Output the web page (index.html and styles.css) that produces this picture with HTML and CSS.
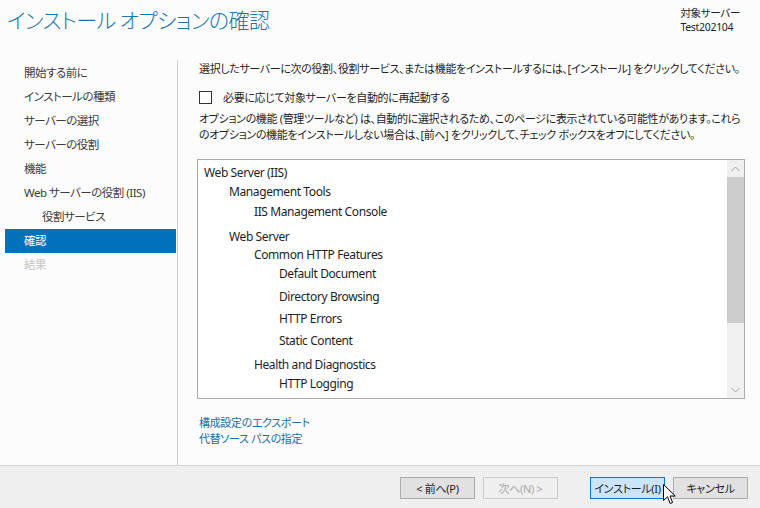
FILE: index.html
```html
<!DOCTYPE html>
<html lang="ja">
<head>
<meta charset="utf-8">
<title>インストール オプションの確認</title>
<link rel="stylesheet" href="styles.css">
</head>
<body>
<div class="wizard">
  <header class="header">
    <h1 class="title">インストール オプションの確認</h1>
    <div class="target">
      <div>対象サーバー</div>
      <div>Test202104</div>
    </div>
  </header>
  <div class="main">
    <nav class="nav">
      <div class="nav-item">開始する前に</div>
      <div class="nav-item">インストールの種類</div>
      <div class="nav-item">サーバーの選択</div>
      <div class="nav-item">サーバーの役割</div>
      <div class="nav-item">機能</div>
      <div class="nav-item">Web サーバーの役割 (IIS)</div>
      <div class="nav-item sub">役割サービス</div>
      <div class="nav-item active">確認</div>
      <div class="nav-item disabled">結果</div>
    </nav>
    <section class="content">
      <p class="jp intro">選択したサーバーに次の役割、役割サービス、または機能をインストールするには、[インストール] をクリックしてください。</p>
      <label class="jp check-row"><span class="checkbox"></span><span>必要に応じて対象サーバーを自動的に再起動する</span></label>
      <p class="jp desc">オプションの機能 (管理ツールなど) は、自動的に選択されるため、このページに表示されている可能性があります。これら<br>のオプションの機能をインストールしない場合は、[前へ] をクリックして、チェック ボックスをオフにしてください。</p>
      <div class="listbox">
        <div class="list">
          <div class="li l0">Web Server (IIS)</div>
          <div class="li l1">Management Tools</div>
          <div class="li l2 t20">IIS Management Console</div>
          <div class="li l1 t25">Web Server</div>
          <div class="li l2 t18">Common HTTP Features</div>
          <div class="li l3">Default Document</div>
          <div class="li l3 t23">Directory Browsing</div>
          <div class="li l3 t22">HTTP Errors</div>
          <div class="li l3 t22">Static Content</div>
          <div class="li l2 t24">Health and Diagnostics</div>
          <div class="li l3">HTTP Logging</div>
        </div>
        <div class="scrollbar">
          <div class="sb-btn"><svg width="9" height="6" viewBox="0 0 9 6"><path d="M0.5 5 L4.5 1 L8.5 5" fill="none" stroke="#a3a3a3" stroke-width="1"/></svg></div>
          <div class="sb-track"><div class="sb-thumb"></div></div>
          <div class="sb-btn"><svg width="9" height="6" viewBox="0 0 9 6"><path d="M0.5 1 L4.5 5 L8.5 1" fill="none" stroke="#a3a3a3" stroke-width="1"/></svg></div>
        </div>
      </div>
      <div class="jp links">
        <a class="link">構成設定のエクスポート</a>
        <a class="link">代替ソース パスの指定</a>
      </div>
    </section>
  </div>
  <footer class="footer">
    <button class="btn">&lt; 前へ(P)</button>
    <button class="btn" disabled>次へ(N) &gt;</button>
    <button class="btn primary">インストール(I)</button>
    <button class="btn">キャンセル</button>
    <svg class="cursor" width="13" height="21" viewBox="0 0 13 21"><path d="M0.5 0.5 L0.5 16.5 L4.5 12.8 L7.2 19.5 L9.6 18.5 L7 12 L12.3 12 Z" fill="#fff" stroke="#000" stroke-width="1" stroke-linejoin="miter"/></svg>
  </footer>
</div>
</body>
</html>
```
FILE: styles.css
```css
* { box-sizing: border-box; }
html, body { margin: 0; padding: 0; }
body {
  width: 760px;
  height: 508px;
  overflow: hidden;
  background: #fcfcfc;
  font-family: "Noto Sans", "Noto Sans CJK JP", sans-serif;
  font-feature-settings: "palt";
  font-size: 12px;
  letter-spacing: -0.4px;
  color: #1e1e1e;
}
.jp { font-size: 11px; letter-spacing: -0.35px; }
.wizard { display: flex; flex-direction: column; height: 508px; }
.header {
  height: 50px;
  display: flex;
  justify-content: space-between;
  align-items: flex-start;
  padding: 0 20px 0 7px;
}
.title {
  margin: 4px 0 0;
  font-size: 21px;
  line-height: 30px;
  font-weight: 300;
  letter-spacing: -0.6px;
  color: #1d74ab;
  font-family: "Noto Sans CJK JP", sans-serif;
}
.target {
  margin-top: 6px;
  font-size: 10.5px;
  line-height: 14px;
  letter-spacing: -0.3px;
  color: #222;
}
.main { flex: 1; display: flex; min-height: 0; }
.nav {
  width: 178px;
  margin-top: 10px;
  padding: 1px 1px 0 5px;
  border-right: 1px solid #d0d0d0;
  font-size: 11.5px;
  letter-spacing: -0.5px;
  color: #3b3b3b;
}
.nav-item { height: 24px; line-height: 24px; padding-left: 19px; white-space: nowrap; }
.nav-item.sub { padding-left: 37px; }
.nav-item.active { background: #0072bc; color: #fff; }
.nav-item.disabled { color: #c6c6c6; }
.content {
  flex: 1;
  padding: 11px 15px 0 21px;
}
.intro { margin: 0; line-height: 16px; white-space: nowrap; }
.check-row {
  display: flex;
  align-items: center;
  gap: 11px;
  margin-top: 12px;
  height: 16px;
}
.checkbox {
  width: 13px;
  height: 13px;
  border: 1px solid #333;
  background: #fff;
}
.desc { margin: 6px 0 0; line-height: 16px; white-space: nowrap; }
.listbox {
  margin-top: 16px;
  margin-left: -2px;
  height: 240px;
  border: 1px solid #acacac;
  background: #fff;
  display: flex;
}
.list { flex: 1; padding: 3px 0 0 6px; }
.li { height: 19px; line-height: 19px; white-space: nowrap; }
.l1 { padding-left: 25px; }
.l2 { padding-left: 50px; }
.l3 { padding-left: 75px; }
.t18 { margin-top: -1px; }
.t20 { margin-top: 1px; }
.t22 { margin-top: 3px; }
.t23 { margin-top: 4px; }
.t24 { margin-top: 5px; }
.t25 { margin-top: 6px; }
.scrollbar {
  width: 17px;
  background: #f0f0f0;
  display: flex;
  flex-direction: column;
}
.sb-btn { height: 17px; display: flex; align-items: center; justify-content: center; }
.sb-track { flex: 1; }
.sb-thumb { height: 146px; background: #cdcdcd; }
.links { margin-top: 16px; display: flex; flex-direction: column; }
.link { line-height: 16px; color: #1a6ba3; }
.footer {
  height: 43px;
  border-top: 1px solid #d6d6d6;
  background: #efefef;
  display: flex;
  justify-content: flex-end;
  align-items: flex-start;
  padding: 11px 12px 0 0;
  position: relative;
}
.btn {
  width: 75px;
  height: 22px;
  margin-left: 8px;
  padding: 0;
  font-family: "Noto Sans", "Noto Sans CJK JP", sans-serif;
  font-feature-settings: "palt";
  font-size: 11px;
  letter-spacing: -0.3px;
  white-space: nowrap;
  color: #1e1e1e;
  background: #e1e1e1;
  border: 1px solid #adadad;
}
.btn[disabled] { color: #a8a8a8; background: #efefef; border-color: #cbcbcb; }
.btn.primary { margin-left: 32px; background: #cce4f7; border-color: #0078d7; }
.cursor { position: absolute; left: 663px; top: 18px; }
```
